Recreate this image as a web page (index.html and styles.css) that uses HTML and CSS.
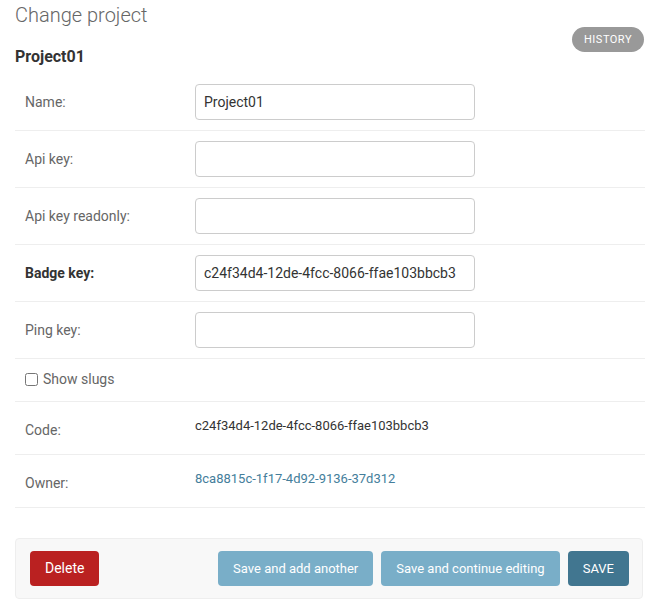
FILE: index.html
```html
<!DOCTYPE html>
<html lang="en">
<head>
<meta charset="utf-8">
<title>Change project</title>
<link rel="stylesheet" href="styles.css">
</head>
<body>
<div class="content">
  <div class="page-head">
    <div class="titles">
      <h1 class="title">Change project</h1>
      <h2 class="subtitle">Project01</h2>
    </div>
    <div class="object-tools">
      <a class="history" href="#">History</a>
    </div>
  </div>

  <form class="change-form">
    <fieldset class="module">
      <div class="form-row">
        <label class="field-label">Name:</label>
        <input class="text-input" type="text" value="Project01">
      </div>
      <div class="form-row">
        <label class="field-label">Api key:</label>
        <input class="text-input" type="text" value="">
      </div>
      <div class="form-row">
        <label class="field-label">Api key readonly:</label>
        <input class="text-input" type="text" value="">
      </div>
      <div class="form-row">
        <label class="field-label required">Badge key:</label>
        <input class="text-input" type="text" value="c24f34d4-12de-4fcc-8066-ffae103bbcb3">
      </div>
      <div class="form-row">
        <label class="field-label">Ping key:</label>
        <input class="text-input" type="text" value="">
      </div>
      <div class="form-row checkbox-row">
        <input class="checkbox" type="checkbox" id="slugs">
        <label class="checkbox-label" for="slugs">Show slugs</label>
      </div>
      <div class="form-row readonly-row">
        <label class="field-label">Code:</label>
        <div class="readonly">c24f34d4-12de-4fcc-8066-ffae103bbcb3</div>
      </div>
      <div class="form-row readonly-row">
        <label class="field-label">Owner:</label>
        <div class="readonly"><a class="link" href="#">8ca8815c-1f17-4d92-9136-37d312</a></div>
      </div>
    </fieldset>

    <div class="submit-row">
      <a class="btn btn-delete" href="#">Delete</a>
      <div class="submit-right">
        <span class="btn btn-light">Save and add another</span>
        <span class="btn btn-light">Save and continue editing</span>
        <span class="btn btn-save">SAVE</span>
      </div>
    </div>
  </form>
</div>
</body>
</html>
```

FILE: styles.css
```css
* { box-sizing: border-box; }

html, body {
  margin: 0;
  padding: 0;
  background: #fff;
  font-family: Roboto, "Liberation Sans", sans-serif;
  color: #333;
}

.content {
  padding: 0 20px 0 15px;
}

.page-head {
  display: flex;
  justify-content: space-between;
  align-items: flex-start;
}

.title {
  margin: 0;
  font-size: 20px;
  font-weight: 300;
  line-height: 30px;
  color: #666;
}

.subtitle {
  margin: 16px 0 0;
  font-size: 16px;
  font-weight: 700;
  line-height: 22px;
  color: #333;
}

.object-tools {
  padding-top: 27px;
  padding-right: 1px;
}

.history {
  display: block;
  height: 25px;
  line-height: 25px;
  padding: 0 12px;
  border-radius: 15px;
  background: #999;
  color: #fff;
  font-size: 11px;
  font-weight: 400;
  letter-spacing: 0.5px;
  text-transform: uppercase;
  text-decoration: none;
}

.change-form {
  margin: 6px 0 0;
}

.module {
  margin: 0;
  padding: 0;
  border: 0;
  min-width: 0;
}

.form-row {
  display: flex;
  align-items: center;
  padding: 10px;
  border-bottom: 1px solid #eee;
  font-size: 14px;
}

.field-label {
  width: 170px;
  flex: none;
  color: #666;
  font-size: 14px;
  line-height: 20px;
}

.field-label.required {
  color: #333;
  font-weight: 700;
}

.text-input {
  width: 280px;
  height: 36px;
  padding: 5px 8px;
  border: 1px solid #ccc;
  border-radius: 4px;
  font-family: Roboto, "Liberation Sans", sans-serif;
  font-size: 14px;
  color: #333;
  background: #fff;
}

.checkbox-row {
  padding-top: 9px;
  padding-bottom: 11px;
}

.checkbox {
  margin: 0 5px 0 0;
  width: 13px;
  height: 13px;
}

.checkbox-label {
  color: #666;
  font-size: 14px;
  line-height: 22px;
}

.readonly-row {
  align-items: flex-start;
}

.readonly-row .field-label {
  padding: 8px 0 4px;
}

.readonly {
  padding-top: 4px;
  font-size: 13px;
  line-height: 20px;
  color: #333;
}

.link {
  color: #447e9b;
  text-decoration: none;
}

.submit-row {
  display: flex;
  justify-content: space-between;
  align-items: center;
  margin: 30px 2px 0 0;
  padding: 12px 13px 12px 14px;
  background: #f8f8f8;
  border: 1px solid #eee;
  border-radius: 4px;
}

.submit-right {
  display: flex;
  gap: 8px;
}

.btn {
  display: block;
  height: 35px;
  line-height: 35px;
  padding: 0 15px;
  border-radius: 4px;
  color: #fff;
  font-size: 13px;
  text-decoration: none;
}

.btn-delete {
  background: #ba2121;
  font-size: 14px;
}

.btn-light {
  background: #79aec8;
}

.btn-save {
  background: #417690;
}
```
